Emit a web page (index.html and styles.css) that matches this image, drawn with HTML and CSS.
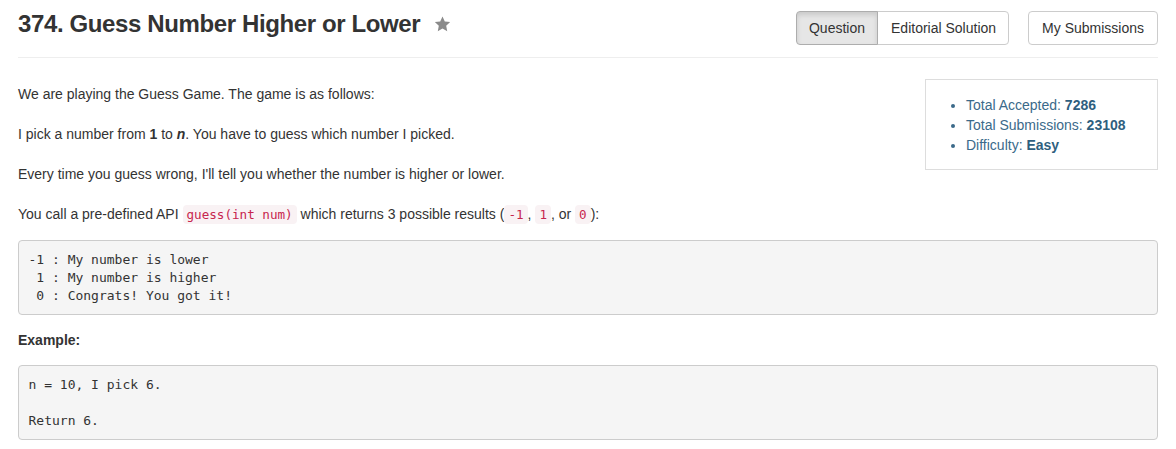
FILE: index.html
```html
<!DOCTYPE html>
<html>
<head>
<meta charset="utf-8">
<link rel="stylesheet" href="styles.css">
</head>
<body>
<div class="container">
  <div class="header">
    <h3 class="title">374. Guess Number Higher or Lower <span class="star"><svg width="17" height="16" viewBox="0 0 24 23"><path d="M12 0.8l3.3 7.1 7.7 0.9-5.7 5.3 1.5 7.7L12 18l-6.8 3.8 1.5-7.7L1 8.8l7.7-0.9z" fill="#8a8a8a"/></svg></span></h3>
    <div class="actions">
      <div class="btn-group">
        <a class="btn active">Question</a>
        <a class="btn">Editorial Solution</a>
      </div>
      <a class="btn solo">My Submissions</a>
    </div>
  </div>
  <div class="body">
    <div class="info">
      <ul>
        <li>Total Accepted: <strong>7286</strong></li>
        <li>Total Submissions: <strong>23108</strong></li>
        <li>Difficulty: <strong>Easy</strong></li>
      </ul>
    </div>
    <div class="content">
      <p>We are playing the Guess Game. The game is as follows:</p>
      <p>I pick a number from <b>1</b> to <b><i>n</i></b>. You have to guess which number I picked.</p>
      <p>Every time you guess wrong, I'll tell you whether the number is higher or lower.</p>
      <p>You call a pre-defined API <code>guess(int num)</code> which returns 3 possible results (<code>-1</code>, <code>1</code>, or <code>0</code>):</p>
<pre>-1 : My number is lower
 1 : My number is higher
 0 : Congrats! You got it!</pre>
      <p><b>Example:</b></p>
<pre>n = 10, I pick 6.

Return 6.</pre>
    </div>
  </div>
</div>
</body>
</html>
```

FILE: styles.css
```css
html, body {
  margin: 0;
  padding: 0;
  background: #fff;
}
body {
  font-family: "Liberation Sans", Arial, sans-serif;
  font-size: 14px;
  line-height: 20px;
  color: #333;
}
.container {
  width: 1140px;
  margin: 0 auto;
  padding: 0 15px;
}
.header {
  display: flex;
  justify-content: space-between;
  align-items: flex-start;
  border-bottom: 1px solid #eee;
  height: 57px;
}
.title {
  margin: 9px 0 0;
  font-size: 24px;
  line-height: 30px;
  font-weight: bold;
  letter-spacing: -0.38px;
  color: #333;
  display: flex;
  align-items: center;
}
.star {
  display: inline-flex;
  margin-left: 14px;
  margin-top: -1px;
}
.actions {
  display: flex;
  gap: 19px;
  margin-top: 11px;
}
.btn-group {
  display: flex;
}
.btn {
  display: block;
  box-sizing: border-box;
  height: 34px;
  padding: 6px 12px;
  font-size: 14px;
  line-height: 20px;
  color: #333;
  background: #fff;
  border: 1px solid #ccc;
  border-radius: 4px;
  text-decoration: none;
  white-space: nowrap;
}
.btn.solo {
  padding: 6px 13px;
}
.btn-group .btn:first-child {
  border-top-right-radius: 0;
  border-bottom-right-radius: 0;
}
.btn-group .btn + .btn {
  margin-left: -1px;
  padding: 6px 12px 6px 13px;
  border-top-left-radius: 0;
  border-bottom-left-radius: 0;
}
.btn.active {
  background: #e6e6e6;
  border-color: #adadad;
  box-shadow: inset 0 3px 5px rgba(0,0,0,0.125);
  position: relative;
  z-index: 1;
}
.body {
  padding-top: 21px;
}
.info {
  float: right;
  width: 233px;
  box-sizing: border-box;
  border: 1px solid #ddd;
  margin-left: 20px;
  padding: 15px 0 14px 0;
  color: #3b6a8a;
}
.info ul {
  margin: 0;
  padding-left: 40px;
}
.info li {
  line-height: 20px;
}
.info strong {
  color: #2f5f7f;
}
.content p {
  margin: 0 0 10px;
  line-height: 30px;
}
code {
  font-family: "DejaVu Sans Mono", monospace;
  font-size: 90%;
  color: #c7254e;
  background: #f9f2f4;
  padding: 2px 4px;
  border-radius: 4px;
}
pre {
  clear: both;
  margin: 0 0 10px;
  padding: 9.5px;
  font-family: "DejaVu Sans Mono", monospace;
  font-size: 13px;
  line-height: 18px;
  color: #333;
  background: #f5f5f5;
  border: 1px solid #ccc;
  border-radius: 4px;
}
```
